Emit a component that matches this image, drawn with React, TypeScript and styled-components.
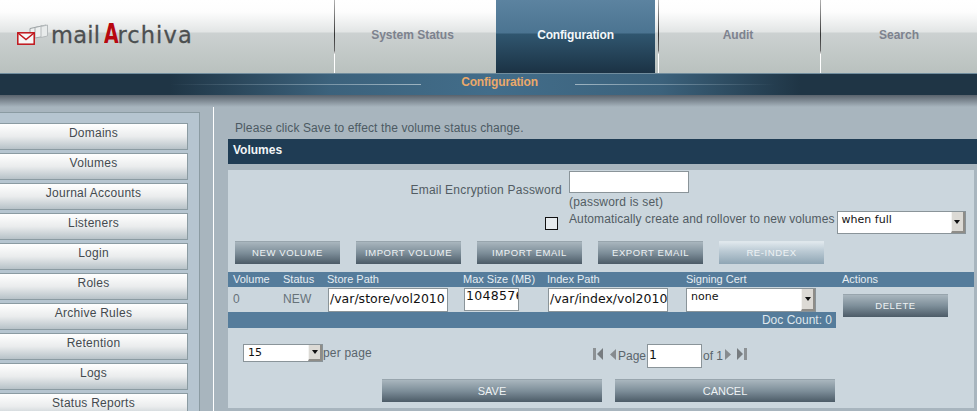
import React from "react";
import styled, { createGlobalStyle } from "styled-components";

const GlobalStyle = createGlobalStyle`
    html, body {
        margin: 0;
        padding: 0;
        height: 411px;
        overflow: hidden;
        background: #a8b5be;
        font-family: "Liberation Sans", Arial, sans-serif;
    }
`;

const Page = styled.div`
    width: 977px;
    height: 411px;
    overflow: hidden;
`;

const Header = styled.div`
    display: flex;
    height: 73px;
    background: linear-gradient(#ffffff 0, #fdfdfd 12px, #e2e5e5 32px, #ccd1d1 33px, #b9c1be 73px);
`;

const LogoArea = styled.div`
    width: 334px;
    display: flex;
    align-items: flex-start;
    padding: 24px 0 0 17px;
    box-sizing: border-box;
`;

const LogoText = styled.div`
    margin-top: -1px;
    font-family: "DejaVu Sans", sans-serif;
    font-size: 22.5px;
    line-height: 22px;
    color: #4c4f50;
    letter-spacing: 0.3px;
    white-space: nowrap;
    -webkit-text-stroke: 0.3px #4c4f50;
    b {
        display: inline-block;
        width: 13px;
        margin: 0 0 0 4px;
        color: #b8070f;
        font-size: 27px;
        font-weight: 700;
        -webkit-text-stroke: 0;
        transform: scaleX(0.7);
        transform-origin: left bottom;
    }
    span {
        letter-spacing: 1.1px;
    }
`;

const Tab = styled.div<{ $active?: boolean; $w: number; $pr?: number }>`
    position: relative;
    width: ${(p) => p.$w}px;
    flex: none;
    box-sizing: border-box;
    display: flex;
    align-items: center;
    justify-content: center;
    padding: 0 ${(p) => p.$pr ?? 0}px 4px 0;
    font-size: 12px;
    font-weight: 700;
    letter-spacing: ${(p) => (p.$active ? -0.15 : 0)}px;
    color: ${(p) => (p.$active ? "#f4f8fb" : "#7d828e")};
    background: ${(p) =>
        p.$active ? "linear-gradient(#5c83a0 0, #4b7491 33px, #30566f 34px, #1b3244 73px)" : "none"};
    border-left: ${(p) => (p.$active ? "none" : "1px solid")};
    border-image: linear-gradient(#b5b5b5 0, #333 35px, #666 50px, #ffffff 54px, #ffffff 73px) 1;
`;

const ActiveGap = styled.div`
    width: 3px;
    flex: none;
`;

const Banner = styled.div`
    position: relative;
    height: 22px;
    box-sizing: border-box;
    border-top: 1px solid #718d9e;
    background: linear-gradient(90deg, #1f3545 0, #1f3545 170px, #3c627c 330px, #426d8a 490px, #3c627c 660px, #1f3545 800px, #1f3545 100%);
    display: flex;
    justify-content: center;
    color: #eba96a;
    font-size: 12px;
    font-weight: 700;
    letter-spacing: -0.15px;
    line-height: 16px;
    padding-left: 22px;
    &::before,
    &::after {
        content: "";
        position: absolute;
        top: 10px;
        height: 1px;
    }
    &::before {
        left: 170px;
        width: 251px;
        background: linear-gradient(90deg, transparent, #9db3c0);
    }
    &::after {
        left: 575px;
        width: 200px;
        background: linear-gradient(90deg, #9db3c0, transparent);
    }
`;

const Shade = styled.div`
    height: 12px;
    background: linear-gradient(#59626c, #a8b5be);
`;

const Body = styled.div`
    display: flex;
`;

const Sidebar = styled.div`
    width: 200px;
    height: 305px;
    flex: none;
    box-sizing: border-box;
    margin-top: 5px;
    padding: 10px 11px 0 0;
    background: #b6c5d0;
    border-top: 1px solid #8b9ba2;
    border-right: 1px solid #8b9ba2;
    display: flex;
    flex-direction: column;
    gap: 3px;
`;

const NavButton = styled.div`
    height: 27px;
    flex: none;
    box-sizing: border-box;
    border: 1px solid #8b9ba2;
    border-left: none;
    background: linear-gradient(#ffffff, #eaeced 50%, #b7c2c8);
    color: #444a4f;
    font-size: 12px;
    letter-spacing: 0.25px;
    text-align: center;
    line-height: 18px;
`;

const Main = styled.div`
    margin-left: 13px;
    border-left: 1px solid #ffffff;
    padding-left: 14px;
    width: 749px;
    flex: none;
    height: 304px;
`;

const Notice = styled.div`
    margin-left: 7px;
    height: 32px;
    color: #4c5a63;
    font-size: 12px;
    letter-spacing: 0.1px;
    line-height: 42px;
`;

const TitleBar = styled.div`
    height: 25px;
    background: #1f3c54;
    color: #f2f5f7;
    font-size: 12px;
    font-weight: 700;
    line-height: 23px;
    padding-left: 5px;
`;

const Panel = styled.div`
    margin-top: 6px;
    width: 746px;
    height: 238px;
    background: #cbd6dd;
    overflow: hidden;
`;

const FormGrid = styled.div`
    display: grid;
    grid-template-columns: 334px 1fr;
    column-gap: 7px;
    color: #525c63;
    font-size: 12px;
`;

const FieldLabel = styled.div`
    text-align: right;
    margin-top: 13px;
    letter-spacing: 0.22px;
`;

const PasswordCol = styled.div`
    padding-top: 1px;
`;

const Hint = styled.div`
    line-height: 15px;
    padding-top: 2px;
    letter-spacing: 0.2px;
`;

const CheckCell = styled.div`
    display: flex;
    justify-content: flex-end;
    padding: 7px 4px 0 0;
`;

const Checkbox = styled.span`
    width: 11px;
    height: 11px;
    border: 1px solid #111;
    background: #e6ebee;
    display: block;
`;

const AutoRow = styled.div`
    display: flex;
    align-items: flex-start;
    gap: 2px;
    line-height: 15px;
    margin-top: 1px;
`;

const AutoText = styled.span`
    padding-top: 1px;
    white-space: nowrap;
    letter-spacing: 0.1px;
`;

const TextInput = styled.div<{ $w: number; $h: number }>`
    width: ${(p) => p.$w}px;
    height: ${(p) => p.$h}px;
    box-sizing: border-box;
    background: #fff;
    border: 1px solid #8a9499;
    font-family: "DejaVu Sans", sans-serif;
    font-size: 12.5px;
    letter-spacing: 0;
    color: #111;
    line-height: ${(p) => p.$h - 4}px;
    padding-left: 1px;
    overflow: hidden;
    white-space: nowrap;
    flex: none;
`;

const SizeInput = styled(TextInput)`
    letter-spacing: 0.3px;
    line-height: 14px;
`;

const Select = styled.div<{ $w: number; $h: number }>`
    width: ${(p) => p.$w}px;
    height: ${(p) => p.$h}px;
    box-sizing: border-box;
    flex: none;
    display: flex;
    background: #fff;
    border: 1px solid #8a9499;
    font-family: "DejaVu Sans", sans-serif;
    font-size: 11px;
    letter-spacing: 0;
    color: #111;
`;

const SelectValue = styled.span`
    flex: 1;
    padding: 0 0 0 4px;
    line-height: 15px;
`;

const SelectArrow = styled.span`
    width: 14px;
    flex: none;
    background: #dcdad5;
    border-right: 2px solid #8f8d88;
    border-bottom: 2px solid #8f8d88;
    border-left: 1px solid #f4f4f2;
    box-sizing: border-box;
    display: flex;
    align-items: center;
    justify-content: center;
    &::after {
        content: "";
        border-left: 3px solid transparent;
        border-right: 3px solid transparent;
        border-top: 4px solid #111;
    }
`;

const ButtonRow = styled.div`
    display: flex;
    gap: 16px;
    margin: 7px 0 0 7px;
`;

const Button = styled.div<{ $disabled?: boolean; $w?: number }>`
    width: ${(p) => p.$w ?? 105}px;
    height: 23px;
    flex: none;
    box-sizing: border-box;
    border-top: 1px solid ${(p) => (p.$disabled ? "#dfe7ec" : "#98a5ad")};
    background: ${(p) =>
        p.$disabled
            ? "linear-gradient(#e0e8ed, #bccbd5 40%, #8ea5b4)"
            : "linear-gradient(#a9b6be, #7d8e99 50%, #4c5b67)"};
    color: #eef2f4;
    font-size: ${(p) => (p.$w ? 11 : 9.5)}px;
    letter-spacing: ${(p) => (p.$w ? 0 : 0.6)}px;
    text-align: center;
    line-height: 22px;
`;

const columns = "50px 44px 136px 84px 139px 156px 1fr";

const TableHead = styled.div`
    margin-top: 8px;
    height: 15px;
    background: #557c9b;
    color: #e6edf2;
    font-size: 11px;
    line-height: 14px;
    display: grid;
    grid-template-columns: ${columns};
    padding-left: 5px;
`;

const TableRow = styled.div`
    display: grid;
    grid-template-columns: ${columns};
    padding: 1px 0 0 5px;
    height: 25px;
    box-sizing: border-box;
    color: #677279;
    font-size: 12px;
    line-height: 23px;
    letter-spacing: 0.2px;
`;

const Cell = styled.div<{ $shift?: number }>`
    margin-left: ${(p) => p.$shift ?? 0}px;
`;

const DeleteButton = styled(Button)`
    margin-top: 6px;
`;

const DocCount = styled.div`
    width: 604px;
    height: 16px;
    background: #557c9b;
    color: #dfe7ed;
    font-size: 12px;
    line-height: 16px;
    text-align: right;
    padding-right: 4px;
`;

const Pager = styled.div`
    display: flex;
    align-items: flex-start;
    height: 51px;
    padding: 16px 0 0 15px;
    box-sizing: border-box;
    color: #5a656c;
    font-size: 12px;
    letter-spacing: 0.2px;
`;

const PerPage = styled.span`
    width: 270px;
    line-height: 18px;
`;

const PagerIcons = styled.div`
    display: flex;
    align-items: center;
    height: 24px;
    line-height: 14px;
    color: #5a656c;
    letter-spacing: 0;
`;

const PagerIcon = styled.svg<{ $m?: string; $flip?: boolean }>`
    flex: none;
    margin: ${(p) => p.$m ?? "0"};
    transform: ${(p) => (p.$flip ? "scaleX(-1)" : "none")};
`;

const PagerText = styled.span<{ $m?: string }>`
    margin: ${(p) => p.$m ?? "0"};
`;

const ActionRow = styled.div`
    display: flex;
    gap: 13px;
    margin-left: 154px;
`;

const First = ({ flip }: { flip?: boolean }) => (
    <PagerIcon width="11" height="12" viewBox="0 0 11 12" $flip={flip} $m={flip ? "-4px 0 0 5px" : "-4px 0 0 0"}>
        <rect x="0" y="0" width="3" height="12" fill="#8c9194" />
        <path d="M10 0v12L4 6z" fill="#777c80" />
    </PagerIcon>
);

const Prev = ({ flip }: { flip?: boolean }) => (
    <PagerIcon width="6" height="11" viewBox="0 0 6 11" $flip={flip} $m={flip ? "-3px 0 0 2px" : "-3px 2px 0 6px"}>
        <path d="M6 0v11L0 5.5z" fill="#868b8f" />
    </PagerIcon>
);

const Envelope = () => (
    <svg width="34" height="22" viewBox="0 0 34 22" style={{ flex: "none" }}>
        <path d="M13 4.500l12-2.500v10l-12 2z" fill="#eef0f0" stroke="#9aa0a2" strokeWidth="1" />
        <path d="M18 3.500l11-2.500v11l-11 2z" fill="#eef0f0" stroke="#a5abad" strokeWidth="1" />
        <path d="M24 2.500l6.500-1.500v11l-6.500 1.500z" fill="#e8ebeb" stroke="#b5babc" strokeWidth="1" />
        <rect x="0.800" y="8.800" width="16.400" height="11.400" fill="#f6f6f6" stroke="#c0141b" strokeWidth="1.500" />
        <path d="M1 9l8 6.500L17 9" fill="none" stroke="#c0141b" strokeWidth="1.500" />
    </svg>
);

const navItems = [
    "Domains",
    "Volumes",
    "Journal Accounts",
    "Listeners",
    "Login",
    "Roles",
    "Archive Rules",
    "Retention",
    "Logs",
    "Status Reports",
];

const App: React.FC = () => {
    return (
        <Page>
            <GlobalStyle />
            <Header>
                <LogoArea>
                    <Envelope />
                    <LogoText>
                        mail<b>A</b><span>rchiva</span>
                    </LogoText>
                </LogoArea>
                <Tab $w={162} $pr={6}>System Status</Tab>
                <Tab $active $w={159}>Configuration</Tab>
                <ActiveGap />
                <Tab $w={162} $pr={3}>Audit</Tab>
                <Tab $w={157}>Search</Tab>
            </Header>
            <Banner>Configuration</Banner>
            <Shade />
            <Body>
                <Sidebar>
                    {navItems.map((item) => (
                        <NavButton key={item}>{item}</NavButton>
                    ))}
                </Sidebar>
                <Main>
                    <Notice>Please click Save to effect the volume status change.</Notice>
                    <TitleBar>Volumes</TitleBar>
                    <Panel>
                        <FormGrid>
                            <FieldLabel>Email Encryption Password</FieldLabel>
                            <PasswordCol>
                                <TextInput $w={120} $h={22} />
                                <Hint>(password is set)</Hint>
                            </PasswordCol>
                            <CheckCell>
                                <Checkbox />
                            </CheckCell>
                            <AutoRow>
                                <AutoText>Automatically create and rollover to new volumes</AutoText>
                                <Select $w={129} $h={23}>
                                    <SelectValue>when full</SelectValue>
                                    <SelectArrow />
                                </Select>
                            </AutoRow>
                        </FormGrid>
                        <ButtonRow>
                            <Button>NEW VOLUME</Button>
                            <Button>IMPORT VOLUME</Button>
                            <Button>IMPORT EMAIL</Button>
                            <Button>EXPORT EMAIL</Button>
                            <Button $disabled>RE-INDEX</Button>
                        </ButtonRow>
                        <TableHead>
                            <span>Volume</span>
                            <span>Status</span>
                            <span>Store Path</span>
                            <span>Max Size (MB)</span>
                            <span>Index Path</span>
                            <span>Signing Cert</span>
                            <span>Actions</span>
                        </TableHead>
                        <TableRow>
                            <Cell>0</Cell>
                            <Cell>NEW</Cell>
                            <Cell $shift={1}>
                                <TextInput $w={120} $h={24}>/var/store/vol2010</TextInput>
                            </Cell>
                            <Cell $shift={1}>
                                <SizeInput $w={55} $h={23}>1048576</SizeInput>
                            </Cell>
                            <Cell $shift={1}>
                                <TextInput $w={120} $h={24}>/var/index/vol2010</TextInput>
                            </Cell>
                            <Cell>
                                <Select $w={130} $h={24}>
                                    <SelectValue>none</SelectValue>
                                    <SelectArrow />
                                </Select>
                            </Cell>
                            <Cell $shift={1}>
                                <DeleteButton>DELETE</DeleteButton>
                            </Cell>
                        </TableRow>
                        <DocCount>Doc Count: 0</DocCount>
                        <Pager>
                            <Select $w={80} $h={18}>
                                <SelectValue>15</SelectValue>
                                <SelectArrow />
                            </Select>
                            <PerPage>per page</PerPage>
                            <PagerIcons>
                                <First />
                                <Prev />
                                <PagerText $m="0 1px 0 0">Page</PagerText>
                                <TextInput $w={55} $h={24}>1</TextInput>
                                <PagerText $m="0 0 0 1px">of 1</PagerText>
                                <Prev flip />
                                <First flip />
                            </PagerIcons>
                        </Pager>
                        <ActionRow>
                            <Button $w={220}>SAVE</Button>
                            <Button $w={220}>CANCEL</Button>
                        </ActionRow>
                    </Panel>
                </Main>
            </Body>
        </Page>
    );
};

export default App;
